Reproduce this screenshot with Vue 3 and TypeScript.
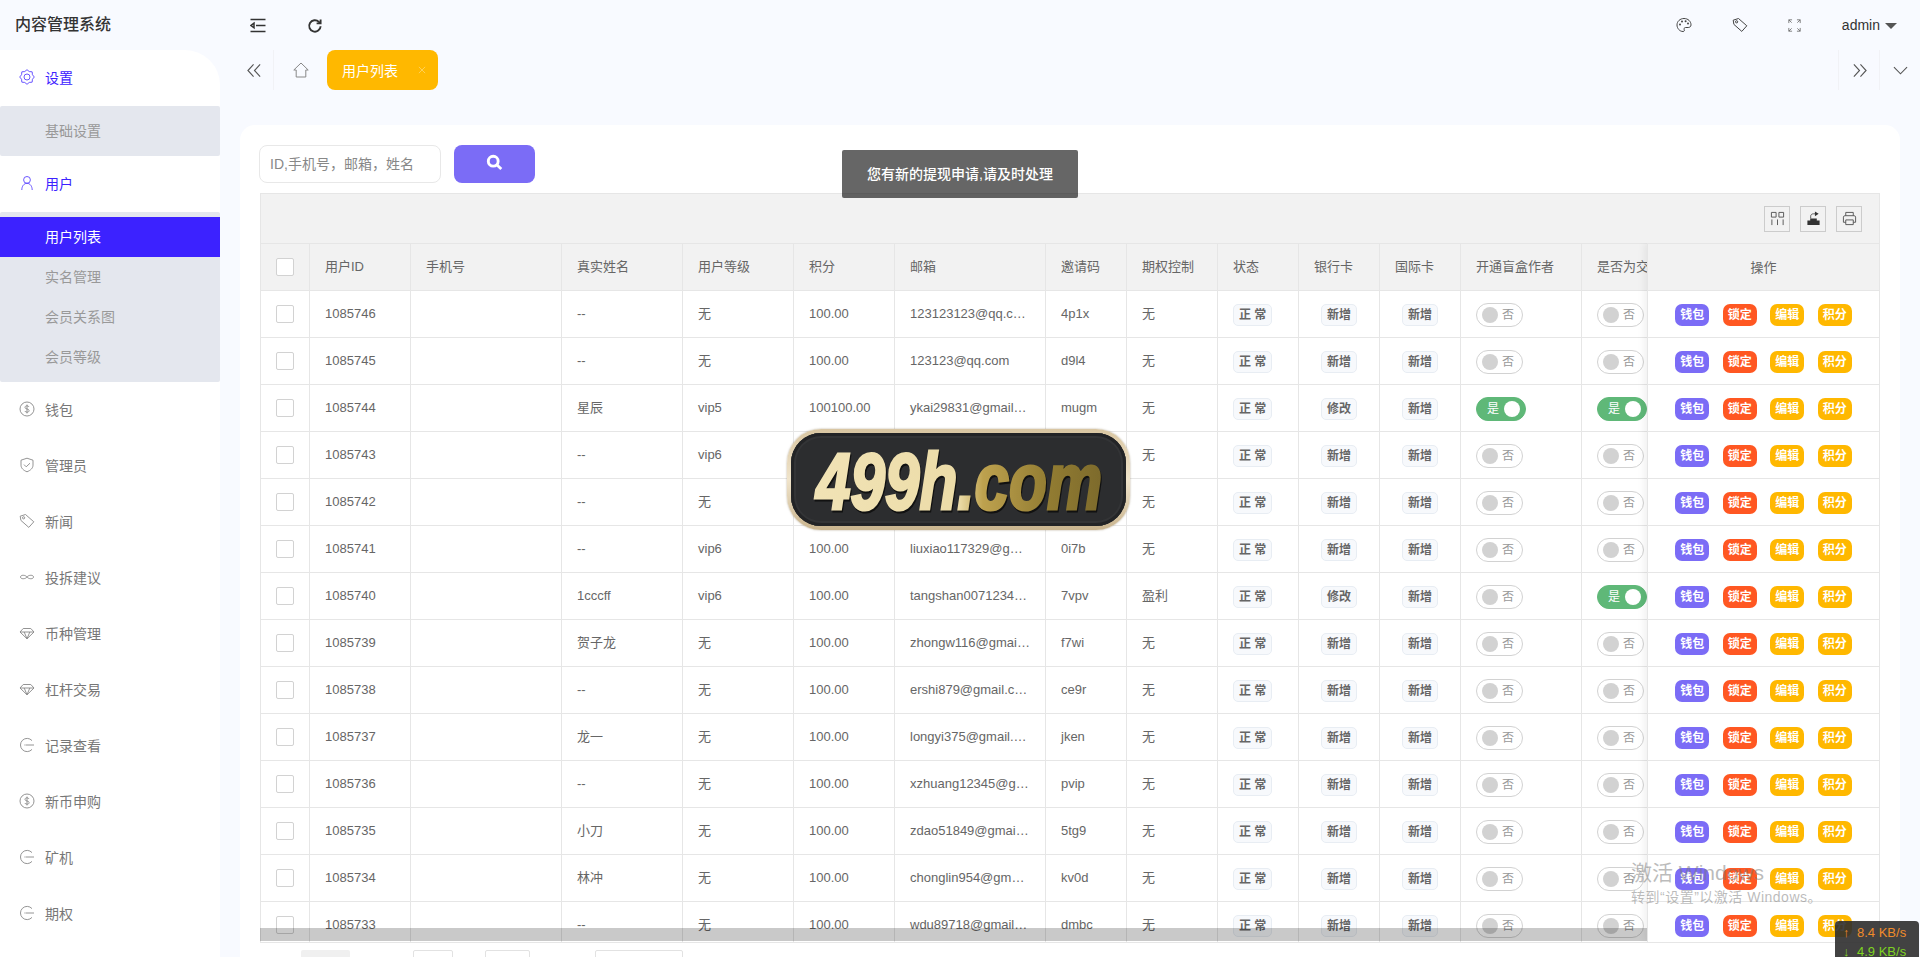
<script setup lang="ts">
interface UserRow {
  id: number
  name: string
  level: string
  score: string
  email: string
  code: string
  option: string
  bank: string
  creator: boolean
  trader: boolean
}

interface MenuGroup {
  label: string
  icon: string
  open?: boolean
  children?: string[]
}

const gearPath = () => {
  // 8 rounded teeth round the centre
  const pts: string[] = []
  for (let i = 0; i < 16; i++) {
    const a = (i * Math.PI) / 8
    const r = i % 2 === 0 ? 7.3 : 5.9
    pts.push(`${(8 + r * Math.cos(a)).toFixed(2)} ${(8 + r * Math.sin(a)).toFixed(2)}`)
  }
  return 'M' + pts.join('L') + 'Z'
}

const icons: Record<string, string[]> = {
  gear: [gearPath(), 'M8 5a3 3 0 1 0 0 6 3 3 0 0 0 0-6z'],
  user: ['M8 1.5a3.4 3.4 0 1 0 0 6.8 3.4 3.4 0 0 0 0-6.8z', 'M2.8 15c0-3.6 2-6.7 5.2-6.7s5.2 3.1 5.2 6.7'],
  dollar: ['M8 1a7 7 0 1 0 0 14A7 7 0 0 0 8 1z', 'M10 5.9C9.6 5.1 8.9 4.8 8 4.8c-1.1 0-2 .6-2 1.6 0 2.2 4.1 1 4.1 3.2 0 1-.9 1.6-2.1 1.6-1 0-1.8-.4-2.2-1.2', 'M8 3.6v8.8'],
  shield: ['M8 1.2l6 2v5c0 3-2.5 5.2-6 6.6-3.5-1.4-6-3.6-6-6.6v-5z', 'M5 7.6l2.2 2.2L11 6.2'],
  tag: ['M1.2 3.2L6.5 1.5l8.3 7.3-5 5.6-7.9-7z', 'M4.6 3.7a1.1 1.1 0 1 0 0 2.2 1.1 1.1 0 0 0 0-2.2z'],
  link: ['M8 8C6.6 5.8 1.5 5.6 1.5 8s5.1 2.2 6.5 0 6.5-2.4 6.5 0S9.4 10.2 8 8z'],
  diamond: ['M4.2 3.5h7.6L15 7l-7 6.8L1 7z', 'M1 7h14', 'M5.2 7L8 13.8 10.8 7'],
  record: ['M13 3.6a6.6 6.6 0 1 0 0 8.8', 'M7 8h8', 'M6 7.4v1.2'],
  fold: ['M0.5 1.5h15', 'M6 7.5h9.5', 'M0.5 13.5h15', 'M4 5.2L1 7.5l3 2.3z'],
  refresh: ['M13.6 8.2a5.7 5.7 0 1 1-1.7-4.3l1.4 1.3', 'M13.6 1.4v4h-4'],
  palette: ['M8 1.5c-3.9 0-7 2.9-7 6.4s2.7 6.6 6 6.6c1.4 0 1.6-.9 1.2-1.8-.5-1 .1-2.2 1.4-2.2h2.6c1.6 0 2.8-1 2.8-2.6 0-3.6-3-6.4-7-6.4z'],
  expand: ['M1 5V1h4', 'M1 1l3.5 3.5', 'M11 1h4v4', 'M15 1l-3.5 3.5', 'M1 11v4h4', 'M1 15l3.5-3.5', 'M15 11v4h-4', 'M15 15l-3.5-3.5'],
  left2: ['M7 1.5L1 8l6 6.5', 'M14 1.5L8 8l6 6.5'],
  right2: ['M2 1.5L8 8l-6 6.5', 'M9 1.5L15 8l-6 6.5'],
  home: ['M8 1L0.8 8h2.4v7h9.6V8h2.4z', 'M3.5 12h9'],
  down: ['M1 4.5l7 7 7-7'],
  close: ['M3 3l10 10', 'M13 3L3 13'],
  cols: ['M1.5 1.5h5v5h-5z', 'M9.5 1.5h5v5h-5z', 'M2 9v6', 'M8 9v6', 'M14 9v6'],
  print: ['M4 5V1.5h8V5', 'M4 12H1.5V6.5c0-.8.7-1.5 1.5-1.5h10c.8 0 1.5.7 1.5 1.5V12H12', 'M4 9.5h8v5H4z']
}

const menus: MenuGroup[] = [
  { label: '设置', icon: 'gear', open: true, children: ['基础设置'] },
  { label: '用户', icon: 'user', open: true, children: ['用户列表', '实名管理', '会员关系图', '会员等级'] },
  { label: '钱包', icon: 'dollar' },
  { label: '管理员', icon: 'shield' },
  { label: '新闻', icon: 'tag' },
  { label: '投拆建议', icon: 'link' },
  { label: '币种管理', icon: 'diamond' },
  { label: '杠杆交易', icon: 'diamond' },
  { label: '记录查看', icon: 'record' },
  { label: '新币申购', icon: 'dollar' },
  { label: '矿机', icon: 'record' },
  { label: '期权', icon: 'record' }
]

const columns = [
  { title: '用户ID', width: 101 },
  { title: '手机号', width: 151 },
  { title: '真实姓名', width: 121 },
  { title: '用户等级', width: 111 },
  { title: '积分', width: 101 },
  { title: '邮箱', width: 151 },
  { title: '邀请码', width: 81 },
  { title: '期权控制', width: 91 },
  { title: '状态', width: 81 },
  { title: '银行卡', width: 81 },
  { title: '国际卡', width: 81 },
  { title: '开通盲盒作者', width: 121 },
  { title: '是否为交易员', width: 121 }
]

const row = (id: number, name: string, level: string, email: string, code: string, extra: Partial<UserRow> = {}): UserRow => ({
  id, name, level, email, code,
  score: '100.00',
  option: '无',
  bank: '新增',
  creator: false,
  trader: false,
  ...extra
})

const rows: UserRow[] = [
  row(1085746, '--', '无', '123123123@qq.com.cn', '4p1x'),
  row(1085745, '--', '无', '123123@qq.com', 'd9l4'),
  row(1085744, '星辰', 'vip5', 'ykai29831@gmail.com', 'mugm', { score: '100100.00', bank: '修改', creator: true, trader: true }),
  row(1085743, '--', 'vip6', '', ''),
  row(1085742, '--', '无', '', ''),
  row(1085741, '--', 'vip6', 'liuxiao117329@gmail.com', '0i7b'),
  row(1085740, '1cccff', 'vip6', 'tangshan0071234@gmail.com', '7vpv', { option: '盈利', bank: '修改', trader: true }),
  row(1085739, '贺子龙', '无', 'zhongw116@gmail.com', 'f7wi'),
  row(1085738, '--', '无', 'ershi879@gmail.com', 'ce9r'),
  row(1085737, '龙一', '无', 'longyi375@gmail.com', 'jken'),
  row(1085736, '--', '无', 'xzhuang12345@gmail.com', 'pvip'),
  row(1085735, '小刀', '无', 'zdao51849@gmail.com', '5tg9'),
  row(1085734, '林冲', '无', 'chonglin954@gmail.com', 'kv0d'),
  row(1085733, '--', '无', 'wdu89718@gmail.com', 'dmbc')
]

const actions = [
  { label: '钱包', cls: 'purple' },
  { label: '锁定', cls: 'red' },
  { label: '编辑', cls: 'amber' },
  { label: '积分', cls: 'amber' }
]
</script>

<template>
  <div class="page">
    <aside class="sidebar">
      <div class="brand">内容管理系统</div>
      <nav class="menu">
        <template v-for="m in menus" :key="m.label">
          <div :class="['menu-item', { open: m.open }]">
            <svg class="ico" viewBox="0 0 16 16"><path v-for="d in icons[m.icon]" :key="d" :d="d" /></svg>
            <span>{{ m.label }}</span>
          </div>
          <div v-if="m.children" class="submenu">
            <div
              v-for="c in m.children"
              :key="c"
              :class="['sub-item', { active: c === '用户列表' }]"
            >{{ c }}</div>
          </div>
        </template>
      </nav>
    </aside>

    <main class="main">
      <header class="topbar">
        <div class="top-left">
          <svg class="top-ico" viewBox="0 0 16 16"><path v-for="d in icons.fold" :key="d" :d="d" /></svg>
          <svg class="top-ico heavy" viewBox="0 0 16 16"><path v-for="d in icons.refresh" :key="d" :d="d" /></svg>
        </div>
        <div class="top-right">
          <svg class="top-ico thin" viewBox="0 0 16 16">
            <path v-for="d in icons.palette" :key="d" :d="d" />
            <circle cx="4" cy="7.5" r="1" /><circle cx="6" cy="4.6" r="1" /><circle cx="9.6" cy="4.2" r="1" /><circle cx="12" cy="6.4" r="1" />
          </svg>
          <svg class="top-ico thin" viewBox="0 0 16 16"><path v-for="d in icons.tag" :key="d" :d="d" /></svg>
          <svg class="top-ico thin small" viewBox="0 0 16 16"><path v-for="d in icons.expand" :key="d" :d="d" /></svg>
          <div class="user">admin<i class="caret"></i></div>
        </div>
      </header>

      <div class="tabs">
        <div class="tab-btn left">
          <svg viewBox="0 0 16 16"><path v-for="d in icons.left2" :key="d" :d="d" /></svg>
        </div>
        <div class="tab-home">
          <svg viewBox="0 0 16 16"><path :d="icons.home[0]" /></svg>
        </div>
        <div class="tab-active">
          <span>用户列表</span>
          <svg viewBox="0 0 16 16"><path v-for="d in icons.close" :key="d" :d="d" /></svg>
        </div>
        <div class="tab-fill"></div>
        <div class="tab-btn right">
          <svg viewBox="0 0 16 16"><path v-for="d in icons.right2" :key="d" :d="d" /></svg>
        </div>
        <div class="tab-btn last">
          <svg viewBox="0 0 16 16"><path v-for="d in icons.down" :key="d" :d="d" /></svg>
        </div>
      </div>

      <section class="card">
        <div class="search">
          <input class="search-input" placeholder="ID,手机号，邮箱，姓名" />
          <button class="search-btn">
            <svg viewBox="0 0 20 20">
              <circle cx="8.5" cy="8.5" r="5.8" />
              <path d="M13 13l5 4.6" />
            </svg>
          </button>
        </div>

        <div class="table-box">
          <div class="toolbar">
            <span class="tool"><svg viewBox="0 0 16 16"><path v-for="d in icons.cols" :key="d" :d="d" /></svg></span>
            <span class="tool">
              <svg viewBox="0 0 16 16">
                <path class="solid" d="M1.5 10h3V8h7v2h3v5h-13z" />
                <path d="M5 8V5.5C5 4 6.2 3 8 3h2" />
                <path class="solid" d="M9.5 0.5L13.5 3l-4 2.5z" />
              </svg>
            </span>
            <span class="tool"><svg viewBox="0 0 16 16"><path v-for="d in icons.print" :key="d" :d="d" /></svg></span>
          </div>

          <div class="table-wrap">
            <table class="grid">
              <colgroup>
                <col style="width: 49px" />
                <col v-for="c in columns" :key="c.title" :style="{ width: c.width + 'px' }" />
              </colgroup>
              <thead>
                <tr>
                  <th class="check"><i class="box"></i></th>
                  <th v-for="c in columns" :key="c.title"><div class="cell">{{ c.title }}</div></th>
                </tr>
              </thead>
              <tbody>
                <tr v-for="r in rows" :key="r.id">
                  <td class="check"><i class="box"></i></td>
                  <td><div class="cell">{{ r.id }}</div></td>
                  <td></td>
                  <td><div class="cell">{{ r.name }}</div></td>
                  <td><div class="cell">{{ r.level }}</div></td>
                  <td><div class="cell">{{ r.score }}</div></td>
                  <td><div class="cell">{{ r.email }}</div></td>
                  <td><div class="cell">{{ r.code }}</div></td>
                  <td><div class="cell">{{ r.option }}</div></td>
                  <td><div class="cell"><span class="tag">正 常</span></div></td>
                  <td><div class="cell center"><span class="tag">{{ r.bank }}</span></div></td>
                  <td><div class="cell center"><span class="tag">新增</span></div></td>
                  <td>
                    <div class="cell">
                      <span :class="['switch', { on: r.creator }]"><em>{{ r.creator ? '是' : '否' }}</em><i></i></span>
                    </div>
                  </td>
                  <td>
                    <div class="cell">
                      <span :class="['switch', { on: r.trader }]"><em>{{ r.trader ? '是' : '否' }}</em><i></i></span>
                    </div>
                  </td>
                </tr>
              </tbody>
            </table>

            <div class="scrollbar"></div>

            <div class="fixed-right">
              <div class="fixed-head">操作</div>
              <div v-for="r in rows" :key="r.id" class="fixed-row">
                <span v-for="a in actions" :key="a.label" :class="['act', a.cls]">{{ a.label }}</span>
              </div>
            </div>
          </div>

          <div class="pager">
            <span class="pg-arrow">‹</span>
            <span class="pg-current">1</span>
            <span class="pg-text wide">› 到第</span>
            <span class="pg-input">1</span>
            <span class="pg-text">页</span>
            <span class="pg-go">确定</span>
            <span class="pg-select">10 条/页</span>
          </div>
        </div>
      </section>
    </main>

    <!-- overlays that sit on top of the page -->
    <div class="toast">您有新的提现申请,请及时处理</div>

    <div class="badge">
      <div class="badge-inner">
        <svg class="badge-logo" viewBox="0 0 320 90">
          <defs>
            <linearGradient id="gold" gradientUnits="userSpaceOnUse" x1="10" y1="0" x2="310" y2="0">
              <stop offset="0" stop-color="#f1e3b6" />
              <stop offset="0.5" stop-color="#ecdca8" />
              <stop offset="0.58" stop-color="#bda14e" />
              <stop offset="0.8" stop-color="#927c32" />
              <stop offset="1" stop-color="#7a682b" />
            </linearGradient>
          </defs>
          <text x="160" y="74" text-anchor="middle" textLength="286" lengthAdjust="spacingAndGlyphs">499h.com</text>
        </svg>
      </div>
    </div>

    <div class="activate">
      <div class="a-big">激活 Windows</div>
      <div class="a-small">转到“设置”以激活 Windows。</div>
    </div>

    <div class="netspeed">
      <div class="up"><span>↑</span>8.4 KB/s</div>
      <div class="dn"><span>↓</span>4.9 KB/s</div>
    </div>
  </div>
</template>

<style>
html,
body {
  margin: 0;
  background: #f8faff;
}
</style>

<style scoped>
.page {
  position: relative;
  display: flex;
  width: 1920px;
  height: 957px;
  overflow: hidden;
  background: #f8faff;
  font-family: "Liberation Sans", "Noto Sans CJK SC", sans-serif;
  font-size: 14px;
  color: #666;
}

svg {
  fill: none;
  stroke: currentColor;
  stroke-width: 1;
}

/* sidebar */
.sidebar {
  width: 220px;
  flex: none;
  display: flex;
  flex-direction: column;
}

.brand {
  height: 50px;
  line-height: 50px;
  padding-left: 15px;
  font-size: 16px;
  font-weight: 500;
  color: #333;
}

.menu {
  flex: 1;
  background: #fff;
  border-top-right-radius: 35px;
}

.menu-item {
  height: 56px;
  box-sizing: border-box;
  display: flex;
  align-items: center;
  gap: 10px;
  padding: 0 0 2px 19px;
  color: #777;
}

.menu-item.open {
  color: #3c22ff;
}

.ico {
  width: 16px;
  height: 16px;
  flex: none;
  color: #888;
  stroke-width: 0.9;
}

.menu-item.open .ico {
  color: #5b45ff;
}

.submenu {
  padding: 5px 0;
  background: #e4e7ee;
  border-radius: 2px;
}

.sub-item {
  height: 40px;
  line-height: 40px;
  padding-left: 45px;
  color: #999;
}

.sub-item.active {
  background: #3c22ff;
  color: #fff;
}

/* top area */
.main {
  flex: 1;
  min-width: 0;
}

.topbar {
  height: 50px;
  display: flex;
  justify-content: space-between;
  align-items: center;
  padding: 0 23px 0 30px;
}

.top-left {
  display: flex;
  gap: 41px;
  color: #333;
  padding-top: 2px;
}

.top-right {
  display: flex;
  align-items: center;
  gap: 40px;
  color: #444;
}

.top-ico {
  width: 16px;
  height: 16px;
  stroke-width: 1.5;
}

.top-ico.heavy {
  stroke-width: 1.9;
}

.top-ico.thin {
  stroke-width: 1;
}

.top-ico.small {
  width: 13px;
  height: 13px;
  color: #666;
}

.top-right circle {
  stroke-width: 0;
  fill: #444;
}

.user {
  display: flex;
  align-items: center;
  margin-left: 1px;
  color: #333;
}

.caret {
  width: 0;
  height: 0;
  margin-left: 5px;
  margin-top: 1px;
  border: 6px solid transparent;
  border-top-color: #555;
  border-bottom-width: 0;
}

.tabs {
  height: 40px;
  display: flex;
  align-items: center;
}

.tab-btn {
  width: 40px;
  height: 40px;
  display: flex;
  align-items: center;
  justify-content: center;
  color: #555;
}

.tab-btn svg {
  width: 15px;
  height: 15px;
  stroke-width: 1.2;
}

.tab-btn.left {
  width: 34px;
  margin-left: 20px;
  padding-right: 4px;
  box-sizing: border-box;
  border-right: 1px solid #f1f2f6;
}

.tab-btn.right {
  border-left: 1px solid #f1f2f6;
}

.tab-btn.last {
  border-left: 1px solid #f1f2f6;
}

.tab-home {
  width: 53px;
  display: flex;
  justify-content: center;
  color: #888;
}

.tab-home svg {
  width: 16px;
  height: 16px;
}

.tab-active {
  width: 111px;
  height: 40px;
  display: flex;
  align-items: center;
  gap: 19px;
  padding-left: 15px;
  box-sizing: border-box;
  background: #ffb800;
  border-radius: 8px;
  color: #fff;
}

.tab-active svg {
  width: 10px;
  height: 10px;
  color: #ffdf8a;
}

.tab-fill {
  flex: 1;
}

/* card */
.card {
  margin: 35px 20px 0;
  padding: 20px 20px 0;
  height: 900px;
  box-sizing: border-box;
  background: #fff;
  border-radius: 15px;
}

.search {
  display: flex;
  gap: 13px;
  height: 38px;
  margin-bottom: 10px;
  margin-left: -1px;
}

.search-input {
  width: 182px;
  box-sizing: border-box;
  padding: 0 10px;
  border: 1px solid #e8e8e8;
  border-radius: 8px;
  outline: none;
  font: inherit;
  color: #666;
}

.search-input::placeholder {
  color: #888;
}

.search-btn {
  width: 81px;
  padding: 0;
  border: none;
  border-radius: 8px;
  background: #7b6cf6;
  color: #fff;
}

.search-btn svg {
  width: 17px;
  height: 17px;
  stroke-width: 3.4;
}

.table-box {
  width: 1620px;
}

.toolbar {
  height: 50px;
  box-sizing: border-box;
  display: flex;
  justify-content: flex-end;
  align-items: center;
  gap: 10px;
  padding-right: 17px;
  background: #f2f2f2;
  border: 1px solid #e6e6e6;
  border-bottom: none;
}

.tool {
  width: 26px;
  height: 26px;
  box-sizing: border-box;
  display: flex;
  align-items: center;
  justify-content: center;
  border: 1px solid #ccc;
  color: #555;
}

.tool svg {
  width: 15px;
  height: 15px;
}

.tool .solid {
  fill: #333;
  stroke: none;
}

.table-wrap {
  position: relative;
  height: 700px;
  overflow: hidden;
  border-right: 1px solid #e6e6e6;
  border-bottom: 1px solid #e6e6e6;
  box-sizing: border-box;
  font-size: 13px;
}

.grid {
  table-layout: fixed;
  width: 1442px;
  border-collapse: collapse;
}

th,
td {
  height: 47px;
  padding: 0;
  box-sizing: border-box;
  border: 1px solid #e6e6e6;
  font-weight: 400;
  text-align: left;
}

thead tr:first-child th {
  background: #f2f2f2;
}

.cell {
  padding: 0 15px;
  line-height: 20px;
  white-space: nowrap;
  overflow: hidden;
  text-overflow: ellipsis;
}

.cell.center {
  text-align: center;
}

.check {
  text-align: center;
}

.box {
  display: inline-block;
  width: 18px;
  height: 18px;
  box-sizing: border-box;
  vertical-align: middle;
  background: #fff;
  border: 1px solid #d2d2d2;
  border-radius: 2px;
}

.tag {
  display: inline-block;
  height: 22px;
  line-height: 20px;
  margin-top: 2px;
  padding: 0 5px;
  box-sizing: border-box;
  background: #f7f9fc;
  border: 1px solid #e8edf3;
  border-radius: 5px;
  font-size: 12px;
  font-weight: 700;
  vertical-align: middle;
}

.switch {
  position: relative;
  display: inline-block;
  width: 47px;
  height: 24px;
  margin-top: 2px;
  box-sizing: border-box;
  border: 1px solid #d2d2d2;
  border-radius: 20px;
  vertical-align: middle;
  background: #fff;
}

.switch i {
  position: absolute;
  left: 5px;
  top: 3px;
  width: 16px;
  height: 16px;
  border-radius: 50%;
  background: #d2d2d2;
}

.switch em {
  position: absolute;
  right: 8px;
  top: 0;
  line-height: 22px;
  font-style: normal;
  font-size: 12px;
  color: #999;
}

.switch.on {
  width: 50px;
  border-color: #5fb878;
  background: #5fb878;
}

.switch.on i {
  left: auto;
  right: 5px;
  background: #fff;
}

.switch.on em {
  right: auto;
  left: 10px;
  color: #fff;
}

.scrollbar {
  position: absolute;
  left: 0;
  right: 0;
  bottom: 1px;
  height: 13px;
  background: rgba(0, 0, 0, 0.21);
}

.fixed-right {
  position: absolute;
  top: 0;
  right: 0;
  width: 232px;
  height: 100%;
  box-sizing: border-box;
  background: #fff;
  border-left: 1px solid #e6e6e6;
  box-shadow: -2px 0 8px rgba(0, 0, 0, 0.07);
  z-index: 2;
}

.fixed-head {
  height: 48px;
  line-height: 47px;
  text-align: center;
  background: #f2f2f2;
  border-top: 1px solid #e6e6e6;
  border-bottom: 1px solid #e6e6e6;
  box-sizing: border-box;
}

.fixed-row {
  height: 47px;
  box-sizing: border-box;
  display: flex;
  justify-content: center;
  align-items: center;
  gap: 13.5px;
  padding-top: 2px;
  border-bottom: 1px solid #e6e6e6;
}

.act {
  width: 34px;
  height: 22px;
  line-height: 22px;
  text-align: center;
  border-radius: 7px;
  font-size: 12px;
  font-weight: 700;
  color: #fff;
}

.act.purple {
  background: #7b6cf6;
}

.act.red {
  background: #ff5722;
}

.act.amber {
  background: #ffb800;
}

/* mostly cut off by the bottom of the window */
.pager {
  display: flex;
  align-items: center;
  height: 28px;
  margin-top: 7px;
}

.pg-arrow {
  width: 41px;
  text-align: center;
  color: #999;
}

.pg-current,
.pg-input,
.pg-go,
.pg-select {
  height: 28px;
  line-height: 26px;
  box-sizing: border-box;
  text-align: center;
  border-radius: 2px;
}

.pg-current {
  width: 49px;
  background: #f0f0f0;
}

.pg-input,
.pg-go,
.pg-select {
  border: 1px solid #e2e2e2;
}

.pg-input {
  width: 40px;
}

.pg-go {
  width: 45px;
}

.pg-select {
  width: 88px;
  margin-left: 65px;
}

.pg-text {
  width: 32px;
  text-align: center;
}

.pg-text.wide {
  width: 63px;
}

/* overlays */
.toast {
  position: absolute;
  left: 842px;
  top: 150px;
  width: 236px;
  height: 48px;
  line-height: 48px;
  text-align: center;
  background: rgba(0, 0, 0, 0.6);
  border-radius: 2px;
  color: #fff;
  font-weight: 500;
  z-index: 5;
}

.badge {
  position: absolute;
  left: 787px;
  top: 429px;
  width: 343px;
  height: 101px;
  box-sizing: border-box;
  padding: 4px;
  border-radius: 34px;
  background: linear-gradient(180deg, #d9c6a2, #f0e4cb 50%, #c9b48e);
  box-shadow: 0 0 2px rgba(120, 100, 60, 0.6);
  z-index: 6;
}

.badge-inner {
  height: 100%;
  display: flex;
  align-items: center;
  justify-content: center;
  border-radius: 30px;
  background: #2c2d2f;
  box-shadow: inset 0 0 0 3px #232426, inset 0 0 0 5px #333436;
  overflow: hidden;
}

.badge-logo {
  width: 320px;
  height: 90px;
  stroke: none;
  overflow: visible;
  filter: drop-shadow(1px 2px 0 #111);
}

.badge-logo text {
  font-family: "Liberation Sans", sans-serif;
  font-size: 80px;
  font-weight: 700;
  font-style: italic;
  fill: url(#gold);
  stroke: url(#gold);
  stroke-width: 3px;
}

.activate {
  position: absolute;
  left: 1631px;
  top: 859px;
  color: rgba(120, 120, 120, 0.5);
  z-index: 7;
}

.a-big {
  font-size: 21px;
  line-height: 28px;
}

.a-small {
  font-size: 14px;
  line-height: 20px;
  letter-spacing: 0.5px;
}

.netspeed {
  position: absolute;
  left: 1835px;
  top: 921px;
  width: 84px;
  height: 36px;
  box-sizing: border-box;
  padding: 2px 0 0 8px;
  background: rgba(45, 45, 45, 0.9);
  border-radius: 4px 4px 0 0;
  font-size: 13px;
  line-height: 19px;
  white-space: nowrap;
  z-index: 8;
}

.netspeed span {
  display: inline-block;
  width: 14px;
}

.up {
  color: #f08c2a;
}

.dn {
  color: #7ed321;
}
</style>
